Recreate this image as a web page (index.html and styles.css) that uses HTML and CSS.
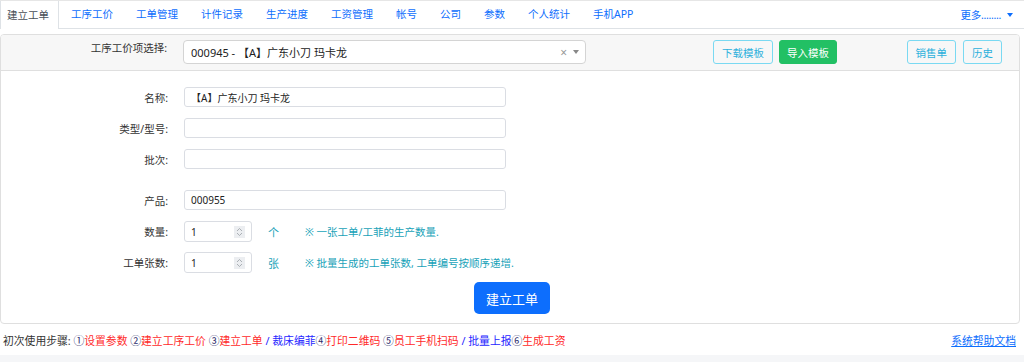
FILE: index.html
```html
<!DOCTYPE html>
<html lang="zh-CN">
<head>
<meta charset="utf-8">
<title>建立工单</title>
<link rel="stylesheet" href="styles.css">
</head>
<body>
<nav class="tabs">
  <a class="tab active">建立工单</a>
  <a class="tab">工序工价</a>
  <a class="tab">工单管理</a>
  <a class="tab">计件记录</a>
  <a class="tab">生产进度</a>
  <a class="tab">工资管理</a>
  <a class="tab">帐号</a>
  <a class="tab">公司</a>
  <a class="tab">参数</a>
  <a class="tab">个人统计</a>
  <a class="tab">手机APP</a>
  <a class="more">更多........<span class="caret"></span></a>
</nav>

<div class="card">
  <div class="card-header">
    <label class="hlabel">工序工价项选择:</label>
    <div class="select">
      <span class="sel-text">000945 - 【A】广东小刀 玛卡龙</span>
      <span class="sel-clear">×</span>
      <span class="sel-arrow"></span>
    </div>
    <div class="btns">
      <span class="btn btn-outline">下载模板</span>
      <span class="btn btn-green">导入模板</span>
    </div>
    <div class="btns right">
      <span class="btn btn-outline">销售单</span>
      <span class="btn btn-outline">历史</span>
    </div>
  </div>

  <div class="card-body">
    <div class="row"><label class="lbl">名称:</label><div class="input">【A】广东小刀 玛卡龙</div></div>
    <div class="row"><label class="lbl">类型/型号:</label><div class="input"></div></div>
    <div class="row gap-after"><label class="lbl">批次:</label><div class="input"></div></div>
    <div class="row"><label class="lbl">产品:</label><div class="input">000955</div></div>
    <div class="row num-row"><label class="lbl">数量:</label>
      <div class="input num">1<span class="spin"><svg width="7" height="10" viewBox="0 0 7 10"><path d="M1 4 L3.5 1.5 L6 4 M1 6 L3.5 8.5 L6 6" fill="none" stroke="#9aa0a6" stroke-width="0.8"/></svg></span></div>
      <span class="unit">个</span><span class="note">※ 一张工单/工菲的生产数量.</span>
    </div>
    <div class="row num-row last"><label class="lbl">工单张数:</label>
      <div class="input num">1<span class="spin"><svg width="7" height="10" viewBox="0 0 7 10"><path d="M1 4 L3.5 1.5 L6 4 M1 6 L3.5 8.5 L6 6" fill="none" stroke="#9aa0a6" stroke-width="0.8"/></svg></span></div>
      <span class="unit">张</span><span class="note">※ 批量生成的工单张数, 工单编号按顺序递增.</span>
    </div>
    <div class="submit-row"><span class="submit">建立工单</span></div>
  </div>
</div>

<footer class="footer">
  <div class="steps">初次使用步骤: <span class="num-c">①</span><span class="red">设置参数</span> <span class="num-c">②</span><span class="red">建立工序工价</span> <span class="num-c">③</span><span class="red">建立工单</span><span class="blue"> / 裁床编菲</span><span class="num-c">④</span><span class="red">打印二维码</span> <span class="num-c">⑤</span><span class="red">员工手机扫码</span><span class="blue"> / 批量上报</span><span class="num-c">⑥</span><span class="red">生成工资</span></div>
  <a class="help">系统帮助文档</a>
</footer>
<div class="band"></div>
</body>
</html>
```

FILE: styles.css
```css
* { box-sizing: border-box; }
html, body { margin: 0; padding: 0; }
body {
  width: 1024px;
  height: 362px;
  overflow: hidden;
  background: #fff;
  color: #333;
  font-family: "Noto Sans", "Noto Sans CJK SC", sans-serif;
  font-size: 10.5px;
}

/* top tabs */
.tabs {
  display: flex;
  height: 29px;
  border-top: 1px solid #e6e6e6;
  border-bottom: 1px solid #dee2e6;
}
.tab {
  display: flex;
  align-items: center;
  padding: 0 7.5px;
  margin-right: 8px;
  color: #0d6efd;
  line-height: 1;
  white-space: nowrap;
}
.tab.active {
  color: #495057;
  background: #fff;
  border-left: 1px solid #dee2e6;
  border-right: 1px solid #dee2e6;
  margin-bottom: -1px;
  padding: 0 9px 0 6px;
  margin-right: 4.5px;
}
.more {
  margin-left: auto;
  display: flex;
  align-items: center;
  padding-right: 11px;
  color: #0d6efd;
  letter-spacing: -0.3px;
}
.caret {
  display: inline-block;
  margin-left: 6px;
  width: 0;
  height: 0;
  border-left: 3px solid transparent;
  border-right: 3px solid transparent;
  border-top: 4px solid #0d6efd;
}

/* card */
.card {
  margin: 5px 4px 0 0;
  border: 1px solid #dfdfdf;
  border-radius: 4px;
  overflow: hidden;
}
.card-header {
  display: flex;
  align-items: flex-start;
  height: 36px;
  padding: 5px 17px 0 0;
  background: #f7f7f7;
  border-bottom: 1px solid #dfdfdf;
}
.hlabel {
  width: 166px;
  text-align: right;
  line-height: 16px;
  color: #333;
}
.select {
  margin-left: 16px;
  width: 403px;
  height: 24px;
  background: #fff;
  border: 1px solid #d4d4d4;
  border-radius: 4px;
  display: flex;
  align-items: center;
  padding: 0 6px 0 7px;
  font-size: 11px;
  color: #222;
}
.sel-text { flex: 1; }
.sel-clear { color: #999; font-size: 12px; margin-right: 6px; }
.sel-arrow {
  width: 0; height: 0;
  border-left: 3.5px solid transparent;
  border-right: 3.5px solid transparent;
  border-top: 4px solid #888;
}
.btns { display: flex; gap: 6px; margin-left: 127px; }
.btns.right { margin-left: auto; gap: 7px; }
.btn {
  display: flex;
  align-items: center;
  height: 24px;
  padding: 0 8px;
  border: 1px solid transparent;
  border-radius: 3px;
  white-space: nowrap;
}
.btn-outline { border-color: #7ad9f2; color: #2cb0dc; background: transparent; }
.btn-green { background: #22c064; border-color: #22c064; color: #fff; padding: 0 7px; }

/* body */
.card-body { padding: 16px 0 9px 0; }
.row { display: flex; align-items: center; margin-bottom: 11px; }
.row.gap-after { margin-bottom: 21px; }
.lbl { width: 167px; text-align: right; color: #333; }
.input {
  margin-left: 16px;
  width: 322px;
  height: 20px;
  border: 1px solid #dadde3;
  border-radius: 3px;
  display: flex;
  align-items: center;
  padding: 0 6px;
  font-size: 10px;
  color: #222;
}
.num-row { margin-bottom: 10px; }
.num-row.last { margin-bottom: 9px; }
.input.num {
  width: 68px;
  height: 21px;
  justify-content: space-between;
  padding: 0 6px 0 6px;
}
.spin {
  width: 11px;
  height: 12px;
  background: #eceef1;
  display: flex;
  align-items: center;
  justify-content: center;
}
.unit { margin-left: 16px; width: 37px; color: #17a2b8; font-size: 11px; }
.note { color: #17a2b8; font-size: 10.5px; }
.submit-row { display: flex; justify-content: center; padding-left: 4px; }
.submit {
  display: flex;
  align-items: center;
  height: 32px;
  padding: 0 12px;
  background: #0d6efd;
  color: #fff;
  border-radius: 5px;
  font-size: 13px;
}

/* footer */
.footer {
  display: flex;
  justify-content: space-between;
  height: 31px;
  padding: 2px 8px 0 3px;
  line-height: 29px;
  font-size: 10.8px;
}
.steps { color: #333; white-space: nowrap; }
.num-c { color: #2b2b6b; }
.red { color: #ff2a2a; }
.blue { color: #2626ff; }
.help { color: #0d6efd; text-decoration: underline; }
.band { height: 10px; background: #f5f6f8; }
```
